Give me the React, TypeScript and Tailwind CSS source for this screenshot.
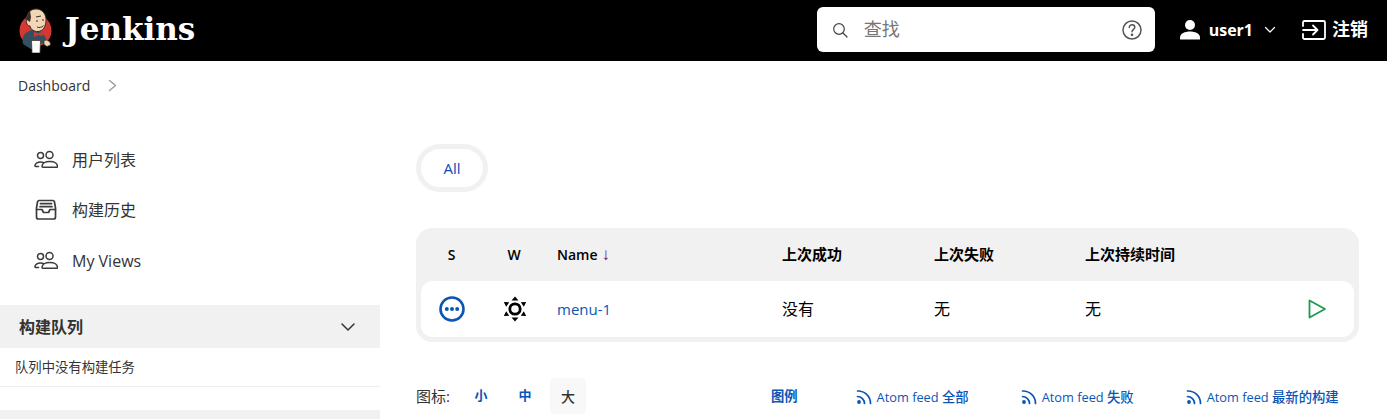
const sans = "font-['Open_Sans','Noto_Sans_CJK_SC',sans-serif]";

function Logo() {
  return (
    <svg width="36" height="46" viewBox="0 0 36 46" className="shrink-0">
      <circle cx="18.500" cy="23.500" r="16" fill="#d33833" />
      <path d="M6 37c-1-5 0-9 3-11l5-3 10 2 5 6-1 6-5-1-1 5-8 1-5-3z" fill="#335061" />
      <path d="M9.500 12C10 5 14.500 1.500 20 2c6 .5 9.500 6 9 12-.5 6-3 10-8 10.500-4 .3-7-2-8-5.500-3 0-4-3-3.500-7z" fill="#f0d6b7" stroke="#3a2c22" strokeWidth="1" />
      <path d="M10 13c-.5-3 .5-7 3-9l1 6-1 5z" fill="#3a2c22" />
      <path d="M19 10l5-1M19 14h2M25 13h2M20 20c2 1 5 .5 6.500-1.500" fill="none" stroke="#3a2c22" strokeWidth="1" />
      <path d="M17 25l4 1.500 5-2-.5 4.500-4.500-1-4 2z" fill="#d33833" />
      <path d="M14.500 33.500h9l-.5 12.500h-8z" fill="#fff" stroke="#3a2c22" strokeWidth=".7" />
      <path d="M27 33.500l3-.5 3 2 .5 3-3.500 1.500-3-2z" fill="#f0d6b7" stroke="#3a2c22" strokeWidth=".7" />
    </svg>
  );
}

function People() {
  return (
    <svg width="24" height="24" viewBox="0 0 24 24" fill="none" stroke="#3c3c3c" strokeWidth="1.500" className="shrink-0">
      <circle cx="6.500" cy="7.500" r="3" />
      <circle cx="15.500" cy="7" r="3.500" />
      <path d="M4.500 18.500H1.800c-.8 0-1-.5-.8-1.200.6-2 2.700-3.300 5.500-3.300 1.200 0 2.300.2 3.200.7" strokeLinecap="round" />
      <path d="M8 18.500c0-3 3.200-5 7.800-5s7.700 2 7.700 5c0 .5-.3.700-.8.700H8.800c-.5 0-.8-.2-.8-.7z" />
    </svg>
  );
}

function Inbox() {
  return (
    <svg width="24" height="24" viewBox="0 0 24 24" fill="none" stroke="#3c3c3c" strokeWidth="1.700" strokeLinejoin="round" strokeLinecap="round" className="shrink-0">
      <path d="M5 2.500h14a1.500 1.500 0 0 1 1.400 1l1.100 6.500v9a2 2 0 0 1-2 2h-15a2 2 0 0 1-2-2v-9l1.100-6.500A1.500 1.500 0 0 1 5 2.500z" />
      <path d="M2.500 11.500H8l1.500 3h5l1.500-3h5.500" />
      <path d="M6.500 5.700h11M6 8.700h12" />
    </svg>
  );
}

function Rss() {
  return (
    <svg width="16" height="16" viewBox="0 0 16 16" fill="none" stroke="#0b55b5" strokeWidth="1.700" strokeLinecap="round" className="shrink-0">
      <circle cx="3" cy="13" r="1.900" fill="#0b55b5" stroke="none" />
      <path d="M1.500 7.500a7 7 0 0 1 7 7" />
      <path d="M1.500 2a12.500 12.500 0 0 1 13 12.500" />
    </svg>
  );
}

function Sun() {
  return (
    <svg width="24" height="26" viewBox="0 0 24 26" className="ml-[1px] shrink-0">
      <circle cx="12" cy="13" r="5.200" fill="none" stroke="#000" strokeWidth="2.800" />
      <path d="M12 .5l3.500 4H8.500zM12 25.500l-3.500-4h7z" fill="#000" />
      <path d="M.8 6l5.400.3-3 4.400zM23.200 6l-5.400.3 3 4.400zM.8 20l5.400-.3-3-4.400zM23.200 20l-5.400-.3 3-4.400z" fill="#000" />
    </svg>
  );
}

function Feed({ latin, cjk }: { latin: string; cjk: string }) {
  return (
    <a className="flex items-center gap-[5px] pt-[1px] text-[12.8px] leading-[20px] font-medium text-[#0b55b5]">
      <Rss />
      <span>{latin} <span className="text-[13.33px]">{cjk}</span></span>
    </a>
  );
}

export default function App() {
  return (
    <div className={`${sans} h-[419px] w-[1387px] overflow-hidden bg-white text-[#333]`}>
      <header className="flex h-[61px] items-center bg-black pb-[2px] text-white">
        <div className="ml-[17px] flex items-center">
          <Logo />
          <span className="ml-[12px] font-['DejaVu_Serif',serif] text-[31px] font-bold leading-none">Jenkins</span>
        </div>
        <div className="ml-auto flex h-[45px] w-[338px] items-center rounded-[6px] bg-white pl-[15px] pr-[12px]">
          <svg width="16" height="16" viewBox="0 0 16 16" fill="none" stroke="#444" strokeWidth="1.200" strokeLinecap="round">
            <circle cx="7" cy="7" r="5.300" />
            <path d="M11 11l4 4" />
          </svg>
          <span className="ml-[16px] text-[18px] text-[#777]">查找</span>
          <svg className="ml-auto" width="22" height="22" viewBox="0 0 22 22" fill="none" stroke="#555" strokeWidth="1.500" strokeLinecap="round">
            <circle cx="11" cy="11" r="9" />
            <path d="M8.300 8.500c0-1.600 1.200-2.700 2.800-2.700s2.700 1 2.700 2.400c0 2.100-2.800 2.300-2.800 4.600" />
            <circle cx="11" cy="15.800" r=".6" fill="#555" />
          </svg>
        </div>
        <div className="ml-[25px] flex items-center">
          <svg width="20" height="21" viewBox="0 0 20 21" fill="#fff">
            <circle cx="10" cy="6" r="5" />
            <path d="M0 18.500C0 14.500 5 12.500 10 12.500s10 2 10 6v1.500a.6.6 0 0 1-.6.6H.6a.6.6 0 0 1-.6-.6z" />
          </svg>
          <span className="ml-[9px] text-[16px] font-bold">user1</span>
          <svg className="ml-[11px]" width="12" height="8" viewBox="0 0 12 8" fill="none" stroke="#fff" strokeWidth="1.200" strokeLinecap="round" strokeLinejoin="round">
            <path d="M1.500 1.500L6 6l4.500-4.500" />
          </svg>
        </div>
        <div className="ml-[26px] mr-[19px] flex items-center">
          <svg width="24" height="20" viewBox="0 0 24 20" fill="none" stroke="#fff" strokeWidth="1.800" strokeLinecap="round" strokeLinejoin="round">
            <path d="M1 6V2.500A1.500 1.500 0 0 1 2.500 1h19A1.500 1.500 0 0 1 23 2.500v15a1.500 1.500 0 0 1-1.500 1.500h-19A1.500 1.500 0 0 1 1 17.500V14" />
            <path d="M1 10h14M11 5.500l4.500 4.500-4.500 4.500" />
          </svg>
          <span className="ml-[6px] text-[18px] font-bold">注销</span>
        </div>
      </header>

      <nav className="flex h-[49px] items-center pl-[18px] text-[14px] text-[#333]">
        <span>Dashboard</span>
        <svg className="ml-[18px]" width="9" height="13" viewBox="0 0 9 13" fill="none" stroke="#999" strokeWidth="1.300" strokeLinecap="round" strokeLinejoin="round">
          <path d="M1.500 1.500l6 5-6 5" />
        </svg>
      </nav>

      <div className="flex">
        <aside className="w-[380px] shrink-0">
          <ul className="pl-[34px] pt-[25px] text-[16px] text-[#333]">
            <li className="flex h-[50px] items-center gap-[14px]"><People />用户列表</li>
            <li className="flex h-[50px] items-center gap-[14px]"><Inbox />构建历史</li>
            <li className="flex h-[52px] items-center gap-[14px]"><People />My Views</li>
          </ul>
          <div className="mt-[18px] flex h-[43px] items-center justify-between bg-[#f1f1f1] pl-[19px] pr-[24px]">
            <span className="text-[16px] font-semibold text-[#333]">构建队列</span>
            <svg width="16" height="10" viewBox="0 0 16 10" fill="none" stroke="#333" strokeWidth="1.500" strokeLinecap="round" strokeLinejoin="round">
              <path d="M2 2l6 6 6-6" />
            </svg>
          </div>
          <div className="flex h-[39px] items-center border-b border-[#eeeeee] pl-[15px] pt-[2px] text-[13.33px] text-[#333]">队列中没有构建任务</div>
          <div className="mt-[23px] h-[20px] bg-[#f1f1f1]" />
        </aside>

        <main className="box-content w-[943px] pl-[36px]">
          <div className="mt-[34px] flex h-[48px] w-[72px] items-center justify-center rounded-full border-[5px] border-[#f1f1f1] text-[15px] font-medium text-[#0b4db8]">All</div>

          <div className="mt-[36px] rounded-[16px] bg-[#f1f1f1] p-[5px] pt-0 text-[14px]">
            <div className="grid h-[53px] grid-cols-[61px_64px_225px_152px_151px_1fr] items-center font-semibold text-black">
              <span className="text-center">S</span>
              <span className="text-center">W</span>
              <span className="flex items-center pl-[11px]">Name<span className="ml-[4px] font-['Liberation_Sans',sans-serif] text-[17px] leading-none font-normal text-[#6a0a6a]">↓</span></span>
              <span className="pl-[11px] text-[15px]">上次成功</span>
              <span className="pl-[11px] text-[15px]">上次失败</span>
              <span className="pl-[11px] text-[15px]">上次持续时间</span>
            </div>
            <div className="grid h-[56px] grid-cols-[61px_64px_225px_152px_151px_1fr] items-center rounded-[12px] bg-white text-[16px] text-black">
              <span className="flex justify-center">
                <svg width="26" height="26" viewBox="0 0 26 26" fill="#0b55b5">
                  <circle cx="13" cy="13" r="11.500" fill="none" stroke="#0b55b5" strokeWidth="2.600" />
                  <circle cx="7.800" cy="13" r="2" />
                  <circle cx="13" cy="13" r="2" />
                  <circle cx="18.200" cy="13" r="2" />
                </svg>
              </span>
              <span className="flex justify-center"><Sun /></span>
              <a className="pl-[11px] text-[15px] font-medium text-[#0b55b5]">menu-1</a>
              <span className="pl-[11px]">没有</span>
              <span className="pl-[11px]">无</span>
              <span className="flex items-center justify-between pl-[11px] pr-[27px]">
                <span>无</span>
                <svg width="20" height="22" viewBox="0 0 20 22" fill="none" stroke="#1e9b52" strokeWidth="1.800" strokeLinejoin="round">
                  <path d="M2.500 2.500v17l15.500-8.500z" />
                </svg>
              </span>
            </div>
          </div>

          <div className="mt-[36px] flex h-[36px] items-center text-[15px]">
            <span className="text-[#333]">图标:</span>
            <span className="ml-[23px] w-[16px] text-center text-[13px] font-bold text-[#0b55b5]">小</span>
            <span className="ml-[28px] w-[16px] text-center text-[13px] font-bold text-[#0b55b5]">中</span>
            <span className="ml-[17px] flex h-[36px] w-[36px] items-center justify-center rounded-[5px] bg-[#f8f8f8] text-[14px] font-medium text-[#333]">大</span>
            <a className="ml-[185px] pt-[1px] text-[13.33px] font-semibold text-[#0b55b5]">图例</a>
            <div className="ml-[58px]"><Feed latin="Atom feed" cjk="全部" /></div>
            <div className="ml-[52px]"><Feed latin="Atom feed" cjk="失败" /></div>
            <div className="ml-[52px]"><Feed latin="Atom feed" cjk="最新的构建" /></div>
          </div>
        </main>
      </div>
    </div>
  );
}
